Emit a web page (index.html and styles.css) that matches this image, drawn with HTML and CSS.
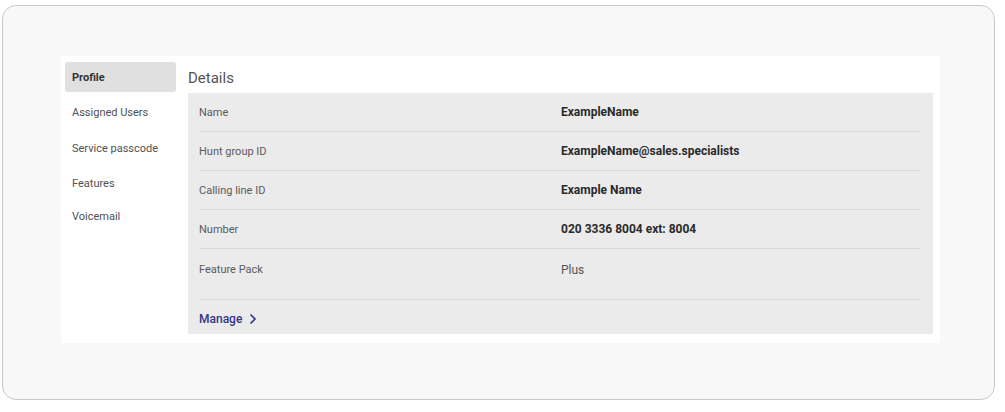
FILE: index.html
```html
<!DOCTYPE html>
<html>
<head>
<meta charset="utf-8">
<link rel="stylesheet" href="styles.css">
</head>
<body>
<div class="card">
  <div class="panel">
    <nav class="sidebar">
      <div class="nav-item active">Profile</div>
      <div class="nav-item">Assigned Users</div>
      <div class="nav-item">Service passcode</div>
      <div class="nav-item">Features</div>
      <div class="nav-item">Voicemail</div>
    </nav>
    <main class="main">
      <h2 class="title">Details</h2>
      <div class="box">
        <div class="row"><span class="label">Name</span><span class="value">ExampleName</span></div>
        <div class="row"><span class="label">Hunt group ID</span><span class="value">ExampleName@sales.specialists</span></div>
        <div class="row"><span class="label">Calling line ID</span><span class="value">Example Name</span></div>
        <div class="row"><span class="label">Number</span><span class="value">020 3336 8004 ext: 8004</span></div>
        <div class="row row-tall"><span class="label">Feature Pack</span><span class="value plain">Plus</span></div>
        <div class="manage">
          <a class="manage-link">Manage
            <svg class="chev" width="8" height="12" viewBox="0 0 8 12"><path d="M1.5 1.5 L6 6 L1.5 10.5" fill="none" stroke="currentColor" stroke-width="1.6"/></svg>
          </a>
        </div>
      </div>
    </main>
  </div>
</div>
</body>
</html>
```
FILE: styles.css
```css
html, body {
  margin: 0;
  padding: 0;
  background: #ffffff;
  font-family: Roboto, "Liberation Sans", sans-serif;
}
.card {
  margin: 5px 0 0 2px;
  width: 993px;
  height: 395px;
  box-sizing: border-box;
  border: 1px solid #c9c9c9;
  border-radius: 14px;
  background: #f8f8f8;
  padding: 50px 0 0 58px;
}
.panel {
  width: 879px;
  height: 287px;
  box-sizing: border-box;
  background: #ffffff;
  display: flex;
  gap: 12px;
  padding: 6px 7px 9px 4px;
}
.sidebar {
  width: 111px;
  flex: none;
  display: flex;
  flex-direction: column;
}
.nav-item {
  height: 30px;
  display: flex;
  align-items: center;
  padding-left: 7px;
  font-size: 11px;
  color: #505050;
  margin-bottom: 5px;
  border-radius: 3px;
}
.nav-item:nth-child(2) { margin-bottom: 6px; }
.nav-item:nth-child(4) { margin-bottom: 3px; }
.nav-item.active {
  background: #e0e0e0;
  font-weight: 700;
  color: #333;
}
.main {
  flex: 1;
  display: flex;
  flex-direction: column;
}
.title {
  margin: 0;
  height: 31px;
  display: flex;
  align-items: center;
  font-size: 15px;
  font-weight: 400;
  color: #555;
}
.box {
  background: #ebebeb;
  height: 241px;
  padding: 0 12px 0 11px;
  box-sizing: border-box;
}
.row {
  height: 39px;
  box-sizing: border-box;
  border-bottom: 1px solid #d9d9d9;
  display: grid;
  grid-template-columns: 362px 1fr;
  align-items: center;
}
.row-tall {
  height: 51px;
  align-items: start;
  padding-top: 14px;
}
.label {
  font-size: 11px;
  color: #5a5a5a;
}
.value {
  font-size: 12px;
  font-weight: 700;
  color: #2a2a2a;
}
.value.plain {
  font-weight: 400;
  color: #555;
}
.manage {
  height: 34px;
  display: flex;
  align-items: center;
  padding-top: 3px;
  box-sizing: border-box;
}
.manage-link {
  font-size: 12px;
  font-weight: 500;
  color: #35358c;
  display: flex;
  align-items: center;
  gap: 7px;
}
.chev { display: block; }
```
